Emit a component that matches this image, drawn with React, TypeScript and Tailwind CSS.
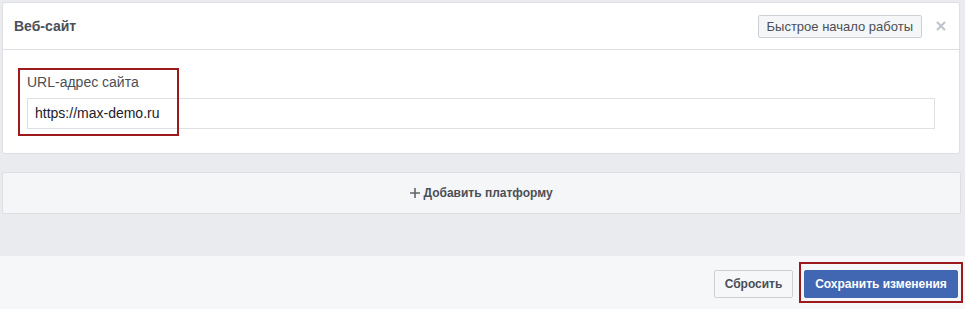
export default function App() {
  return (
    <div
      className="w-[965px] h-[309px] bg-[#e9ebee] flex flex-col overflow-hidden"
      style={{ fontFamily: '"Liberation Sans", Arial, sans-serif' }}
    >
      <div className="pl-[2px] pt-[2px] w-[960px]">
        {/* platform card */}
        <div className="bg-white border border-[#dddfe2] rounded-[3px] h-[152px] flex flex-col">
          <div className="h-[47px] border-b border-[#dddfe2] flex items-center pl-[11px] pr-[13px]">
            <h2 className="text-[14px] font-bold text-[#4b4f56] flex-1">Веб-сайт</h2>
            <button className="h-[23px] px-[8px] bg-[#f5f6f7] border border-[#ccd0d5] rounded-[2px] text-[13px] text-[#4b4f56] leading-none">
              Быстрое начало работы
            </button>
            <button className="ml-[14px] text-[#bec2c9]">
              <svg width="10" height="10" viewBox="0 0 10 10">
                <path d="M1 1L9 9M9 1L1 9" stroke="currentColor" strokeWidth="2" />
              </svg>
            </button>
          </div>
          <div className="relative pl-[24px] pr-[24px] pt-[23px]">
            <label className="block text-[14px] text-[#4b4f56] leading-[18px]">URL-адрес сайта</label>
            <div className="mt-[7px] h-[31px] border border-[#dddfe2] flex items-center px-[7px] text-[14px] text-[#1d2129]">
              https://max-demo.ru
            </div>
            <div className="absolute left-[15px] top-[18px] w-[161px] h-[68px] border-2 border-[#9c1a1c]" />
          </div>
        </div>

        {/* add platform */}
        <button className="mt-[18px] w-[959px] h-[42px] bg-[#f5f6f7] border border-[#dddfe2] rounded-[2px] flex items-center justify-center gap-[3px] text-[12px] font-bold text-[#4b4f56]">
          <svg width="10" height="10" viewBox="0 0 10 10" className="text-[#606770]">
            <path d="M5 0V10M0 5H10" stroke="currentColor" strokeWidth="1.6" />
          </svg>
          Добавить платформу
        </button>
      </div>

      <div className="mt-auto h-[53px] bg-[#f6f7f9] flex items-start justify-end pt-[14px] pr-[7px] gap-[11px]">
        <button className="h-[28px] w-[79px] bg-[#f6f7f9] border border-[#ced0d4] rounded-[2px] text-[12px] font-bold text-[#4b4f56]">
          Сбросить
        </button>
        <div className="relative">
          <button className="h-[28px] w-[154px] bg-[#4267b2] border border-[#4267b2] rounded-[2px] text-[12px] font-bold text-white">
            Сохранить изменения
          </button>
          <div className="absolute -left-[5px] -top-[8px] w-[164px] h-[41px] border-2 border-[#9c1a1c]" />
        </div>
      </div>
    </div>
  );
}
